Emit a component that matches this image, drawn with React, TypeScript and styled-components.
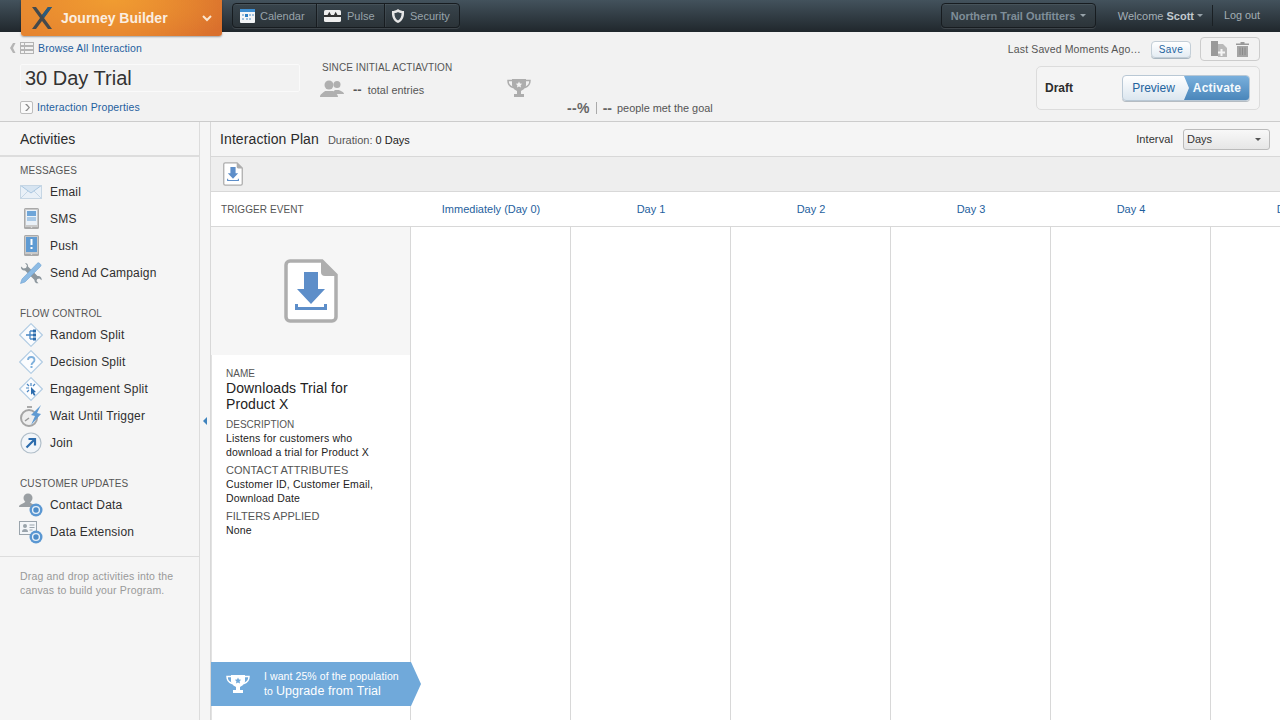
import React from "react";
import styled, { createGlobalStyle } from "styled-components";

const Global = createGlobalStyle`
  html, body { margin: 0; padding: 0; height: 100%; overflow: hidden; }
  body { font-family: "Liberation Sans", Arial, sans-serif; background: #f5f5f5; color: #333; }
  #root { height: 720px; width: 1280px; overflow: hidden; }
  * { box-sizing: border-box; }
`;

const Page = styled.div`display: flex; flex-direction: column; width: 1280px; height: 720px; overflow: hidden;`;

/* ---------- Top bar ---------- */
const TopBar = styled.header`
  flex: none; height: 32px; display: flex; align-items: flex-start; padding-left: 21px; position: relative; z-index: 3;
  background: linear-gradient(#43525c, #20272c);
`;
const Brand = styled.div`
  flex: none; width: 201px; height: 36px; display: flex; align-items: center; padding: 0 10px;
  background: radial-gradient(ellipse 130px 50px at 45% 0%, #f09c31 0%, rgba(240,156,49,0) 100%), linear-gradient(90deg, #e5832f 0%, #e5802f 50%, #d96f2d 100%);
  border-radius: 0 0 3px 3px; box-shadow: 0 1px 2px rgba(0,0,0,.35);
`;
const BrandName = styled.span`margin-left: 8px; font-size: 14px; font-weight: 700; color: #fbeee0; flex: 1;`;
const NavGroup = styled.nav`
  display: flex; margin: 3px 0 0 10px; height: 25px; border: 1px solid #171c20; border-radius: 4px;
  background: linear-gradient(#38444c, #2b3338); box-shadow: 0 1px 0 rgba(255,255,255,.12), inset 0 1px 0 rgba(255,255,255,.07);
`;
const NavItem = styled.a<{ $w: number; $gap?: number; $pad?: number }>`
  width: ${p => p.$w}px; display: flex; align-items: center; gap: ${p => p.$gap ?? 5}px; padding-left: ${p => p.$pad ?? 7}px; font-size: 11px; color: #98a3aa;
  & + & { border-left: 1px solid #171c20; box-shadow: inset 1px 0 0 rgba(255,255,255,.06); }
`;
const TopRight = styled.div`margin-left: auto; display: flex; align-items: center; height: 31px; padding-right: 20px;`;
const OrgButton = styled.div`
  width: 155px; height: 25px; display: flex; align-items: center; gap: 5px; padding-left: 9px; font-size: 11px; font-weight: 700; color: #7f8e99;
  background: linear-gradient(#3a464e, #2c3439); border: 1px solid #171c20; border-radius: 4px;
  box-shadow: 0 1px 0 rgba(255,255,255,.12), inset 0 1px 0 rgba(255,255,255,.07);
`;
const Welcome = styled.div`margin-left: 22px; font-size: 11px; color: #a4aeb5; display: flex; align-items: center; gap: 3px; b { color: #c2cad0; }`;
const Caret = styled.i<{ $c?: string }>`
  display: inline-block; width: 0; height: 0; border: 3px solid transparent; border-top: 3px solid ${p => p.$c || "#98a3aa"}; border-bottom: 0;
`;
const LogOut = styled.div`margin-left: 9px; padding-left: 11px; border-left: 1px solid #1a2024; height: 21px; line-height: 21px; font-size: 10.8px; color: #a4aeb5;`;

/* ---------- Sub header ---------- */
const SubHeader = styled.section`
  flex: none; height: 90px; display: flex; background: #f2f2f2; border-bottom: 1px solid #ccc; position: relative; z-index: 2;
`;
const TitleCol = styled.div`width: 322px; flex: none; padding: 8px 0 0 10px; display: flex; flex-direction: column;`;
const BrowseRow = styled.div`display: flex; align-items: center; gap: 4px; height: 16px;`;
const Link = styled.a`color: #1f5f9e; font-size: 10.5px; letter-spacing: .14px;`;
const NameBox = styled.div`
  margin: 8px 0 0 10px; width: 280px; height: 28px; border: 1px solid #fafafa; border-radius: 2px; padding-left: 4px;
  font-size: 20px; line-height: 26px; color: #333;
`;
const PropsRow = styled.div`margin: 8px 0 0 10px; display: flex; align-items: center; gap: 4px; height: 14px;`;
const StatsCol = styled.div`width: 185px; flex: none; padding-top: 30px;`;
const Since = styled.div`font-size: 10px; line-height: 12px; color: #555; white-space: nowrap; letter-spacing: .08px;`;
const EntryRow = styled.div`display: flex; align-items: center; margin: 5px 0 0 -2px; height: 18px;`;
const EntryDash = styled.span`margin: 4px 6px 0 9px; font-size: 13px; font-weight: 700; color: #555; line-height: 14px;`;
const EntryText = styled.span`margin-top: 4px; font-size: 10.8px; letter-spacing: .05px; color: #555;`;
const TrophyCol = styled.div`width: 60px; flex: none; padding-top: 46px;`;
const GoalCol = styled.div`flex: none; display: flex; align-items: center; height: 14px; margin-top: 69px; gap: 6px;`;
const GoalPct = styled.span`font-size: 14px; font-weight: 700; color: #666; letter-spacing: .3px;`;
const GoalSep = styled.i`width: 1px; height: 12px; background: #aaa;`;
const GoalDash = styled.span`font-size: 14px; font-weight: 700; color: #666; line-height: 14px;`;
const GoalText = styled.span`font-size: 10.9px; margin-left: -1px; color: #555;`;
const RightCol = styled.div`margin-left: auto; padding: 5px 20px 0 0; display: flex; flex-direction: column; align-items: flex-end;`;
const SaveRow = styled.div`display: flex; align-items: center; height: 24px;`;
const SavedText = styled.span`font-size: 10.5px; color: #555; letter-spacing: .13px;`;
const SaveBtn = styled.button`
  margin: 0 9px 0 10px; width: 40px; height: 17px; padding: 0; font: 400 10px "Liberation Sans", Arial, sans-serif; letter-spacing: .4px; color: #24649f;
  background: linear-gradient(#fff, #e4ecf3); border: 1px solid #c3ced7; border-radius: 4px; box-shadow: 0 1px 0 #a9b6c0;
`;
const IconBox = styled.div`
  width: 60px; height: 24px; border: 1px solid #ccc; border-radius: 4px; display: flex; align-items: center; justify-content: center; gap: 9px;
`;
const DraftPanel = styled.div`
  margin-top: 5px; width: 224px; height: 44px; border: 1px solid #dcdcdc; border-radius: 5px; background: #f4f4f4;
  display: flex; align-items: center; padding: 0 9px 0 8px;
`;
const DraftLabel = styled.span`font-size: 12px; font-weight: 700; color: #2c2c2c; flex: 1;`;
const Segmented = styled.div`
  width: 128px; height: 26px; display: flex; border-radius: 4px; border: 1px solid #b9c8d5; overflow: hidden; box-shadow: 0 1px 0 #b5bcc2;
  background: linear-gradient(#fff, #dbe6ef);
`;
const Preview = styled.span`width: 61px; text-align: center; line-height: 24px; font-size: 12px; color: #23649f;`;
const Activate = styled.span`
  flex: 1; text-align: center; line-height: 24px; font-size: 12px; font-weight: 700; letter-spacing: .2px; color: #f5fafd; padding-left: 1px;
  background: linear-gradient(#79afdc, #4a86ba);
  clip-path: polygon(0 0, 100% 0, 100% 100%, 0 100%, 5px 50%);
`;

/* ---------- Body ---------- */
const Body = styled.div`flex: 1; min-height: 0; display: flex;`;
const Sidebar = styled.aside`flex: none; width: 200px; border-right: 1px solid #dcdcdc; background: #f5f5f5;`;
const SideTitle = styled.h2`margin: 0; height: 35px; padding: 1px 0 0 20px; line-height: 33px; font-size: 14px; font-weight: 400; color: #2b2b2b; border-bottom: 2px solid #ddd;`;
const SideGroup = styled.div<{ $first?: boolean }>`margin-top: ${p => (p.$first ? 7 : 21)}px;`;
const GroupLabel = styled.div`padding-left: 20px; font-size: 10px; line-height: 14px; color: #555; letter-spacing: .12px;`;
const Activity = styled.div`display: flex; align-items: center; height: 27px; padding-left: 19px; gap: 7px; font-size: 12px; color: #2f2f2f; letter-spacing: .2px;`;
const ActivityIcon = styled.span`width: 24px; height: 24px; flex: none; display: flex; align-items: center; justify-content: center;`;
const SideFoot = styled.p`margin: 11px 0 0; padding: 12px 0 0 20px; border-top: 1px solid #ddd; font-size: 10.5px; line-height: 14px; color: #999; letter-spacing: .17px;`;
const Gutter = styled.div`flex: none; width: 11px; background: #f5f5f5; display: flex; align-items: center; padding-left: 3px; box-shadow: inset -1px 0 0 #d8d8d8;`;
const CollapseArrow = styled.i`width: 0; height: 0; border: 4px solid transparent; border-left: 0; border-right: 4px solid #3f83bd;`;
const Main = styled.main`flex: 1; min-width: 0; display: flex; flex-direction: column; background: #fff; overflow: hidden;`;
const PlanHead = styled.div`flex: none; height: 35px; display: flex; align-items: center; padding: 0 10px 0 9px; background: #f5f5f5; border-bottom: 1px solid #d8d8d8;`;
const PlanTitle = styled.h1`margin: 0; font-size: 14px; font-weight: 400; color: #2b2b2b; letter-spacing: .1px;`;
const Duration = styled.span`margin: 2px 0 0 9px; font-size: 11px; color: #555; b { font-weight: 400; color: #222; }`;
const IntervalLabel = styled.span`margin-left: auto; font-size: 11px; letter-spacing: .1px; color: #333;`;
const Select = styled.div`
  margin-left: 10px; width: 87px; height: 21px; display: flex; align-items: center; justify-content: space-between; padding: 0 8px 0 3px; font-size: 11px; color: #333;
  background: linear-gradient(#f8f8f8, #e6e6e6); border: 1px solid #bbb; border-radius: 3px;
`;
const ToolRow = styled.div`flex: none; height: 35px; padding: 5px 0 0 12px; background: #eee; border-bottom: 1px solid #d8d8d8;`;
const ColHead = styled.div`flex: none; height: 35px; display: flex; background: #fff; border-bottom: 1px solid #d8d8d8;`;
const TriggerHead = styled.div`flex: none; width: 200px; padding-left: 10px; line-height: 35px; font-size: 10px; color: #555; letter-spacing: .08px;`;
const DayHead = styled.div`flex: none; width: 160px; text-align: center; line-height: 35px; font-size: 11px; color: #1f5f9e;`;
const Canvas = styled.div`flex: 1; min-height: 0; display: flex;`;
const TriggerCol = styled.div`flex: none; width: 200px; display: flex; flex-direction: column; border-right: 1px solid #d8d8d8; box-shadow: inset 1px 0 0 #e2e2e2;`;
const TriggerArt = styled.div`flex: none; height: 128px; background: #f6f6f6; display: flex; justify-content: center; padding-top: 32px;`;
const Card = styled.div`padding: 12px 0 0 15px;`;
const CardLabel = styled.div`font-size: 10px; line-height: 13px; color: #555; margin-top: 6px; &:first-child { margin-top: 0; }`;
const CardLabelWide = styled(CardLabel)`font-size: 11px; margin-top: 5px;`;
const CardName = styled.div`font-size: 14px; line-height: 16px; color: #222; width: 150px; letter-spacing: .1px;`;
const CardText = styled.div`font-size: 10.5px; line-height: 14px; color: #222; width: 170px; letter-spacing: .17px;`;
const GoalBanner = styled.div`
  margin-top: auto; margin-bottom: 14px; width: 210px; height: 44px; flex: none; position: relative; z-index: 1; display: flex; align-items: center; padding-left: 15px; gap: 14px;
  background: #70a9da; clip-path: polygon(0 0, 200px 0, 100% 50%, 200px 100%, 0 100%);
`;
const BannerText = styled.div`color: #fff; font-size: 10.5px; line-height: 15px; letter-spacing: .08px; white-space: nowrap; b { font-weight: 400; font-size: 12.5px; }`;
const DayCol = styled.div`flex: none; width: 160px; border-right: 1px solid #d8d8d8;`;

/* ---------- Icons ---------- */
const Logo = () => (
  <svg width="22" height="24" viewBox="0 0 22 24"><path d="M1 1h4l6 8 6-8h4l-8 11 8 11h-4l-6-8-6 8H1l8-11z" fill="#44494c" /><path d="M11 9l6-8h4l-8 11z" fill="#2d5b7c" /></svg>
);
const Chevron = () => <svg width="10" height="7" viewBox="0 0 10 7"><path d="M1 1l4 4 4-4" fill="none" stroke="#fbe6cf" strokeWidth="2" /></svg>;
const CalIcon = () => (
  <svg width="15" height="14" viewBox="0 0 15 14"><rect width="15" height="14" rx="1" fill="#f3f5f7" /><rect width="15" height="3" fill="#3f8ed0" /><g fill="#9fc0dd"><rect x="2" y="5" width="2" height="2" /><rect x="9" y="5" width="2" height="2" /><rect x="12" y="5" width="2" height="2" /><rect x="2" y="9" width="2" height="2" /><rect x="6" y="9" width="2" height="2" /><rect x="9" y="9" width="2" height="2" /></g><rect x="5" y="5" width="3" height="3" fill="#2e7fc4" /></svg>
);
const PulseIcon = () => (
  <svg width="17" height="12" viewBox="0 0 16 12" preserveAspectRatio="none"><rect width="16" height="12" rx="1.5" fill="#eee" /><path d="M0 6h4l1-2 1 2h4l1-2 1 2h4" stroke="#333" strokeWidth="2" fill="none" /></svg>
);
const ShieldIcon = () => (
  <svg width="14" height="14" viewBox="0 0 14 14"><path d="M1 2c2 0 4-.5 6-2 2 1.5 4 2 6 2 .5 6-1.5 10-6 12C2.5 12 .5 8 1 2z" fill="#e6e6e6" /><path d="M3.5 4c1.5 0 2.500-.3 3.500-1 1 .7 2 1 3.500 1 .2 3.500-1 6-3.500 7.500C4.500 10 3.300 7.500 3.500 4z" fill="#3a464e" /></svg>
);
const BackIcon = () => <svg width="6" height="10" viewBox="0 0 6 10"><path d="M5.500 0L3 5l2.500 5H3L0 5l3-5z" fill="#b5b5b5" /></svg>;
const GridIcon = () => (
  <svg width="14" height="12" viewBox="0 0 14 12"><rect width="14" height="12" fill="#b4b4b4" /><g fill="#f2f2f2"><rect x="1" y="1" width="3" height="2" /><rect x="5" y="1" width="8" height="2" /><rect x="1" y="5" width="3" height="2" /><rect x="5" y="5" width="8" height="2" /><rect x="1" y="9" width="3" height="2" /><rect x="5" y="9" width="8" height="2" /></g></svg>
);
const PropsIcon = () => (
  <svg width="13" height="13" viewBox="0 0 13 13"><rect x=".5" y=".5" width="12" height="12" rx="1.5" fill="#fafafa" stroke="#bdbdbd" /><path d="M5 3l3.500 3.500L5 10H7l3-3.500L7 3z" fill="#8a8a8a" /></svg>
);
const PeopleIcon = () => (
  <svg width="24" height="17" viewBox="0 0 24 17"><g fill="#b0b0b0"><circle cx="17" cy="4.500" r="3.500" /><path d="M12 14c0-2 2-3 3-4h4c2 1 5 2 5 4z" /><circle cx="9" cy="5" r="4.500" /><path d="M0 17c0-3 3-4 5-6h8c2 2 5 3 5 6z" /></g></svg>
);
const Trophy = ({ c = "#adadad", star = "#f2f2f2", w = 24, h = 20 }: { c?: string; star?: string; w?: number; h?: number }) => (
  <svg width={w} height={h} viewBox="0 0 24 20">
    <path d="M5 1h14v6c0 3-3 5-5 6v3h3v3H7v-3h3v-3C8 12 5 10 5 7z" fill={c} />
    <path d="M5 2.500H1c0 4 2 6 5 7M19 2.500h4c0 4-2 6-5 7" fill="none" stroke={c} strokeWidth="1.500" />
    <path d="M12 3.500l1 2 2.200.3-1.600 1.500.4 2.200-2-1-2 1 .4-2.200L8.800 5.800l2.200-.3z" fill={star} />
  </svg>
);
const PlusDoc = () => (
  <svg width="16" height="16" viewBox="0 0 16 16"><path d="M0 0h7v15H0z" fill="#999" /><path d="M7 3h5l4 4v9H7z" fill="#b9b9b9" /><path d="M9.500 8h2v2.500H14v2h-2.500V15h-2v-2.500H7v-2h2.500z" fill="#f5f5f5" /></svg>
);
const Trash = () => (
  <svg width="13" height="15" viewBox="0 0 13 15"><path d="M0 1.500h4.500V0h4v1.500H13V3H0z" fill="#999" /><path d="M1 4h11v11H1z" fill="#a5a5a5" /><path d="M4 5.500V13M6.500 5.500V13M9 5.500V13" stroke="#8a8a8a" /></svg>
);
const Mail = () => (
  <svg width="22" height="14" viewBox="0 0 22 14"><rect width="22" height="14" fill="#e9f0f7" /><path d="M0 0l11 8L22 0" fill="#d6e4f1" stroke="#a8c5df" /><path d="M0 14l8-8M22 14l-8-8" stroke="#c4d6e6" /><rect x=".5" y=".5" width="21" height="13" fill="none" stroke="#c6d6e4" /></svg>
);
const Phone = ({ children }: { children: React.ReactNode }) => (
  <svg width="15" height="21" viewBox="0 0 15 21"><rect width="15" height="21" rx="1.5" fill="#a9a9a9" /><rect x="1" y="1" width="13" height="18" fill="#c9c9c9" /><rect x="2" y="2" width="11" height="15" fill="#eaf1f8" />{children}<circle cx="7.500" cy="19.200" r=".8" fill="#ddd" /></svg>
);
const Tools = () => (
  <svg width="22" height="22" viewBox="0 0 22 22">
    <path d="M5 1L7 3.500 6 6 3.500 6.500 1 4.500C.5 7 2.500 9 5 8.500l9.500 9.500c-.3 2 1.700 3.800 4 3.200L16.500 19l.8-2 2.200-.5 2 1.800c.7-2.500-1.500-4.800-4-4.200L8 4.500C8.300 2.500 7 1 5 1z" fill="#8d979e" />
    <path d="M2 17l-1.500 4.500L5 20 20.500 4.500c.7-.7.7-1.500 0-2.200l-1-1c-.7-.6-1.500-.6-2.200 0z" fill="#8dbbe4" stroke="#6ea3d4" strokeWidth=".6" />
  </svg>
);
const Diamond = ({ children }: { children: React.ReactNode }) => (
  <svg width="24" height="24" viewBox="0 0 24 24"><path d="M12 .7L23.300 12 12 23.300 .7 12z" fill="#fbfcfe" stroke="#b3cde4" strokeWidth="1.200" />{children}</svg>
);
const Watch = () => (
  <svg width="24" height="24" viewBox="0 0 24 24"><circle cx="10" cy="14" r="8" fill="#eee" stroke="#a5a5a5" strokeWidth="2" /><path d="M8 3h5" stroke="#aaa" strokeWidth="2" /><path d="M10 14l-4 3" stroke="#999" strokeWidth="1.500" /><path d="M22 1L12 11l4 1-4 9 10-11-4-1z" fill="#5f9ad2" /></svg>
);
const JoinIcon = () => (
  <svg width="22" height="22" viewBox="0 0 22 22"><circle cx="11" cy="11" r="10" fill="#f1f5f9" stroke="#b1bfca" strokeWidth="1.200" /><path d="M6.500 15.500L14 8M8.500 7h6.500v6.500" fill="none" stroke="#2c6cad" strokeWidth="2.200" /></svg>
);
const Sync = ({ x, y }: { x: number; y: number }) => (
  <g transform={`translate(${x} ${y})`}><circle r="6.500" fill="#5a97d2" /><circle r="3.400" fill="#4d8cc8" stroke="#e7f0f8" strokeWidth="1.400" /></g>
);
const ContactIcon = () => (
  <svg width="24" height="24" viewBox="0 0 24 24"><circle cx="9" cy="5" r="4.500" fill="#9a9fa3" /><path d="M0 14c0-3 4-3 6-5h5c1 2 4 2 5 4v1z" fill="#9a9fa3" /><Sync x={17} y={17} /></svg>
);
const ExtIcon = () => (
  <svg width="24" height="24" viewBox="0 0 24 24"><rect x=".5" y="1.500" width="17" height="13" fill="#f3f6f9" stroke="#9aa4ac" /><circle cx="6" cy="6" r="2" fill="#9aa4ac" /><path d="M3 12c0-2 1-3 3-3s3 1 3 3z" fill="#9aa4ac" /><path d="M10.500 5h5M10.500 7.500h5M10.500 10h3" stroke="#9aa4ac" /><Sync x={17} y={17} /></svg>
);
const Doc = ({ w, h }: { w: number; h: number }) => (
  <svg width={w} height={h} viewBox="0 0 54 64">
    <path d="M6 2h32l14 14v42a4 4 0 0 1-4 4H6a4 4 0 0 1-4-4V6a4 4 0 0 1 4-4z" fill="#fff" stroke="#aeaeae" strokeWidth="3.500" />
    <path d="M37 1l16 16H41a4 4 0 0 1-4-4z" fill="#aeaeae" />
    <path d="M20 13h14v17h7L27 45 13 30h7z" fill="#5d8ec9" />
    <path d="M11 45h3v3h26v-3h3v6H11z" fill="#5d8ec9" />
  </svg>
);

const Blue = "#4a87c4";
const days = ["Immediately (Day 0)", "Day 1", "Day 2", "Day 3", "Day 4", "Day 5"];

const groups: { label: string; items: [string, React.ReactNode][] }[] = [
  {
    label: "MESSAGES",
    items: [
      ["Email", <Mail />],
      ["SMS", <Phone><rect x="3" y="3" width="9" height="5" fill="#6ea5d8" /><rect x="3" y="9" width="9" height="4" fill="#a9c9e6" /></Phone>],
      ["Push", <Phone><rect x="2" y="2" width="11" height="15" fill="#5f9bd3" /><rect x="6.500" y="4" width="2" height="6" fill="#fff" /><rect x="6.500" y="12" width="2" height="2" fill="#fff" /></Phone>],
      ["Send Ad Campaign", <Tools />],
    ],
  },
  {
    label: "FLOW CONTROL",
    items: [
      ["Random Split", <Diamond><path d="M7 12h4M11 8v8M11 8h3M11 16h3M11 12h3" stroke={Blue} strokeWidth="1.300" fill="none" /><path d="M14 6.500h3v3h-3zM14 10.500h3v3h-3zM14 14.500h3v3h-3z" fill="#2c6cad" /></Diamond>],
      ["Decision Split", <Diamond><path d="M9 10c0-4 6.500-4 6.500 0 0 2.500-3 2.500-3 5" fill="none" stroke="#7fb0dc" strokeWidth="1.800" /><rect x="11.500" y="16" width="2" height="2" fill="#7fb0dc" /></Diamond>],
      ["Engagement Split", <Diamond><path d="M12 6v3M7 11h3M8 7l2 2M16 7l-2 2M8 15l2-2" stroke={Blue} strokeWidth="1.200" /><path d="M12 10l5 5-2 .5 1.500 2.500-1.500.8-1.500-2.500-1.500 1.500z" fill="#2c6cad" /></Diamond>],
      ["Wait Until Trigger", <Watch />],
      ["Join", <JoinIcon />],
    ],
  },
  {
    label: "CUSTOMER UPDATES",
    items: [
      ["Contact Data", <ContactIcon />],
      ["Data Extension", <ExtIcon />],
    ],
  },
];

export default function App() {
  return (
    <Page>
      <Global />
      <TopBar>
        <Brand>
          <Logo />
          <BrandName>Journey Builder</BrandName>
          <Chevron />
        </Brand>
        <NavGroup>
          <NavItem $w={83}><CalIcon />Calendar</NavItem>
          <NavItem $w={68} $gap={6}><PulseIcon />Pulse</NavItem>
          <NavItem $w={75} $pad={6}><ShieldIcon />Security</NavItem>
        </NavGroup>
        <TopRight>
          <OrgButton>Northern Trail Outfitters <Caret /></OrgButton>
          <Welcome><span>Welcome <b>Scott</b></span> <Caret /></Welcome>
          <LogOut>Log out</LogOut>
        </TopRight>
      </TopBar>

      <SubHeader>
        <TitleCol>
          <BrowseRow>
            <BackIcon />
            <GridIcon />
            <Link>Browse All Interaction</Link>
          </BrowseRow>
          <NameBox>30 Day Trial</NameBox>
          <PropsRow><PropsIcon /><Link>Interaction Properties</Link></PropsRow>
        </TitleCol>
        <StatsCol>
          <Since>SINCE INITIAL ACTIAVTION</Since>
          <EntryRow>
            <PeopleIcon />
            <EntryDash>--</EntryDash>
            <EntryText>total entries</EntryText>
          </EntryRow>
        </StatsCol>
        <TrophyCol><Trophy /></TrophyCol>
        <GoalCol>
          <GoalPct>--%</GoalPct>
          <GoalSep />
          <GoalDash>--</GoalDash>
          <GoalText>people met the goal</GoalText>
        </GoalCol>
        <RightCol>
          <SaveRow>
            <SavedText>Last Saved Moments Ago…</SavedText>
            <SaveBtn>Save</SaveBtn>
            <IconBox><PlusDoc /><Trash /></IconBox>
          </SaveRow>
          <DraftPanel>
            <DraftLabel>Draft</DraftLabel>
            <Segmented>
              <Preview>Preview</Preview>
              <Activate>Activate</Activate>
            </Segmented>
          </DraftPanel>
        </RightCol>
      </SubHeader>

      <Body>
        <Sidebar>
          <SideTitle>Activities</SideTitle>
          {groups.map((g, i) => (
            <SideGroup key={g.label} $first={i === 0}>
              <GroupLabel>{g.label}</GroupLabel>
              {g.items.map(([name, icon]) => (
                <Activity key={name}><ActivityIcon>{icon}</ActivityIcon>{name}</Activity>
              ))}
            </SideGroup>
          ))}
          <SideFoot>Drag and drop activities into the<br />canvas to build your Program.</SideFoot>
        </Sidebar>
        <Gutter><CollapseArrow /></Gutter>
        <Main>
          <PlanHead>
            <PlanTitle>Interaction Plan</PlanTitle>
            <Duration>Duration: <b>0 Days</b></Duration>
            <IntervalLabel>Interval</IntervalLabel>
            <Select>Days <Caret $c="#555" /></Select>
          </PlanHead>
          <ToolRow><Doc w={20} h={24} /></ToolRow>
          <ColHead>
            <TriggerHead>TRIGGER EVENT</TriggerHead>
            {days.map(d => <DayHead key={d}>{d}</DayHead>)}
          </ColHead>
          <Canvas>
            <TriggerCol>
              <TriggerArt><Doc w={54} h={64} /></TriggerArt>
              <Card>
                <CardLabel>NAME</CardLabel>
                <CardName>Downloads Trial for Product X</CardName>
                <CardLabel>DESCRIPTION</CardLabel>
                <CardText>Listens for customers who<br />download a trial for Product X</CardText>
                <CardLabelWide>CONTACT ATTRIBUTES</CardLabelWide>
                <CardText>Customer ID, Customer Email,<br />Download Date</CardText>
                <CardLabelWide>FILTERS APPLIED</CardLabelWide>
                <CardText>None</CardText>
              </Card>
              <GoalBanner>
                <Trophy c="#fff" star="#70a9da" />
                <BannerText>I want 25% of the population<br />to <b>Upgrade from Trial</b></BannerText>
              </GoalBanner>
            </TriggerCol>
            {[0, 1, 2, 3, 4].map(i => <DayCol key={i} />)}
          </Canvas>
        </Main>
      </Body>
    </Page>
  );
}
